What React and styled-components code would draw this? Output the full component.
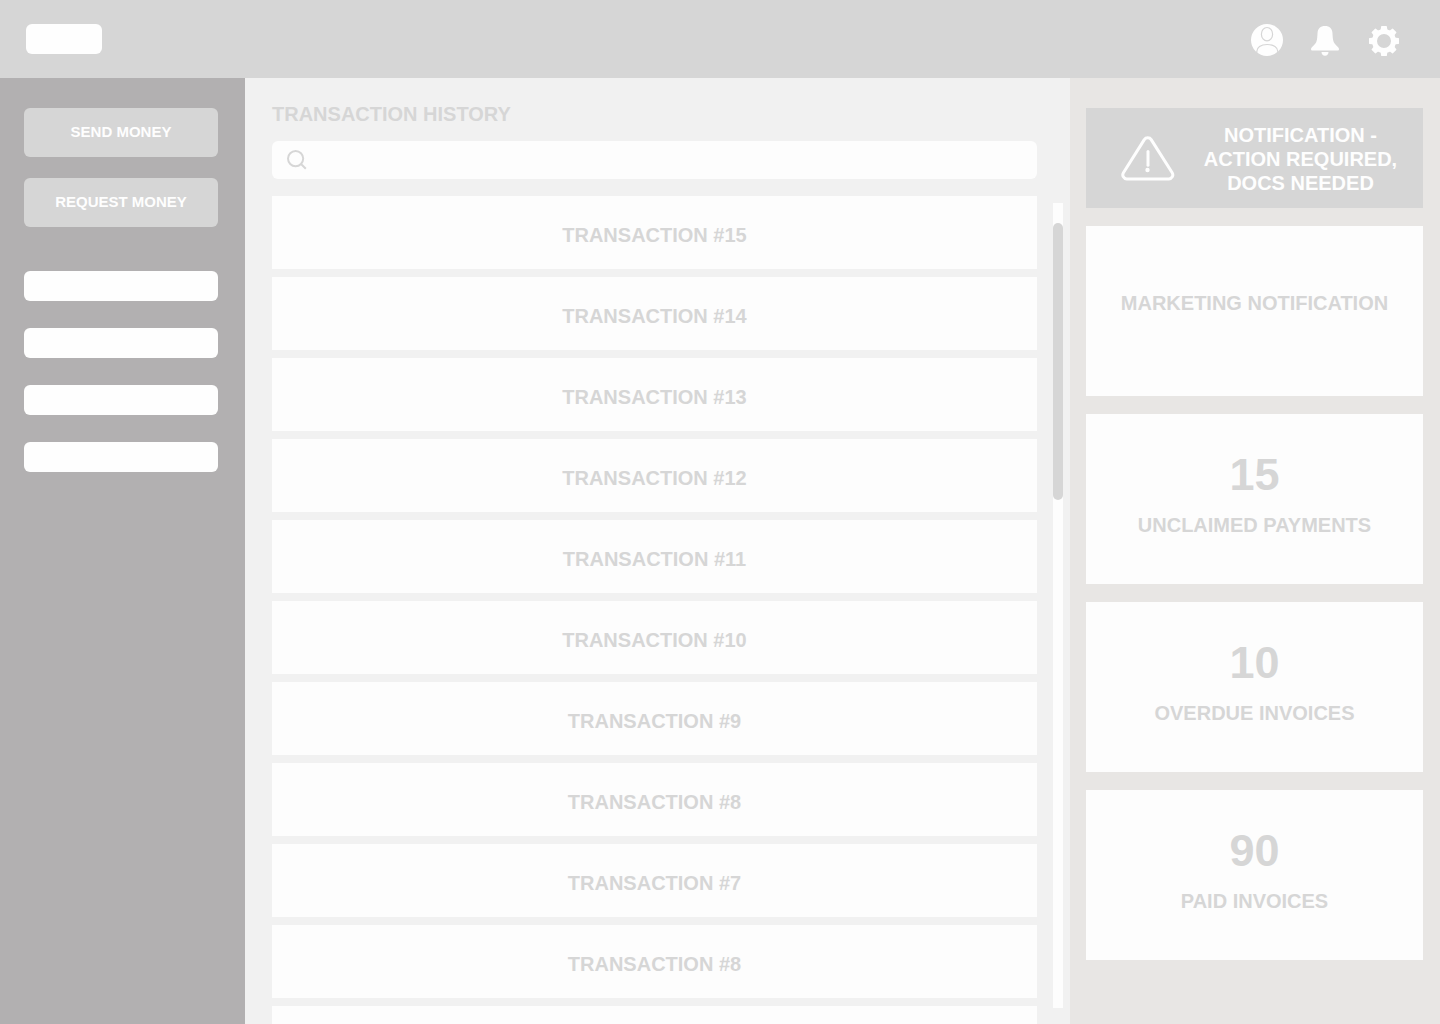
import React from "react";
import styled, { createGlobalStyle } from "styled-components";

const transactions = [15, 14, 13, 12, 11, 10, 9, 8, 7, 8];

const stats = [
  { value: 15, label: "UNCLAIMED PAYMENTS" },
  { value: 10, label: "OVERDUE INVOICES" },
  { value: 90, label: "PAID INVOICES" },
];

const links = ["Overview", "Payments", "Invoices", "Reports"];

const gearTeeth = [0, 45, 90, 135, 180, 225, 270, 315];

const ProfileIcon = () => (
  <svg width="32" height="32" viewBox="0 0 32 32" fill="#fefefe">
    <circle cx="16" cy="16" r="16" />
    <g fill="none" stroke="#d6d6d6" strokeWidth="1.2">
      <ellipse cx="16" cy="10.2" rx="5.6" ry="6.7" />
      <path d="M5.800 29v-1.500c0-4 3.800-7 10.400-7s10.600 3 10.600 7v1.500" />
    </g>
  </svg>
);

const BellIcon = () => (
  <svg width="30" height="32" viewBox="1 0 30 32" fill="#fefefe">
    <path d="M15 2c-4.700 0-7 2.500-7.400 6.500-.4 4-.2 7-1.400 9.700-1.100 2.400-3.400 3.600-4.700 5.500-1 1.500-.4 2.900 1 2.900h25c1.400 0 2-1.400 1-2.900-1.300-1.900-3.600-3.100-4.700-5.500-1.200-2.700-1-5.700-1.400-9.700C22 4.500 19.700 2 15 2z" />
    <path d="M11.500 28h7c0 2.200-1.500 3.800-3.500 3.800s-3.500-1.600-3.500-3.800z" />
  </svg>
);

const GearIcon = () => (
  <svg width="30" height="32" viewBox="0 -2 30 32" fill="#fefefe">
    {gearTeeth.map((angle) => (
      <path
        key={angle}
        d="M10.500 5l1.200-1.500.4-3q.1-.5.600-.5h4.600q.5 0 .600.500l.4 3 1.200 1.500z"
        transform={`rotate(${angle} 15 15)`}
      />
    ))}
    <circle cx="15" cy="15" r="9.500" fill="none" stroke="#fefefe" strokeWidth="5" />
  </svg>
);

const SearchIcon = () => (
  <svg
    width="20"
    height="20"
    viewBox="0 0 20 20"
    fill="none"
    stroke="#d6d6d6"
    strokeWidth="2"
  >
    <circle cx="8.600" cy="8.600" r="7.600" />
    <path d="M14 14l4.800 4.800" />
  </svg>
);

const WarningIcon = () => (
  <svg
    width="54"
    height="46"
    viewBox="0 0 54 46"
    fill="none"
    stroke="#fefefe"
    strokeWidth="3"
    strokeLinecap="round"
    strokeLinejoin="round"
  >
    <path d="M23.300 3.600a4.200 4.200 0 0 1 6.900 0l21 33.200a4 4 0 0 1-3.400 6.100h-42a4 4 0 0 1-3.400-6.100z" />
    <path d="M27 15.500v13.700" />
    <circle cx="26.500" cy="34" r="2.200" fill="#fefefe" stroke="none" />
  </svg>
);

const App = () => {
  return (
    <>
      <GlobalStyle />
      <Page>
        <Header>
          <Logo href="#" aria-label="Home" />
          <HeaderActions>
            <IconButton aria-label="Profile">
              <ProfileIcon />
            </IconButton>
            <IconButton aria-label="Notifications">
              <BellIcon />
            </IconButton>
            <IconButton aria-label="Settings">
              <GearIcon />
            </IconButton>
          </HeaderActions>
        </Header>
        <Body>
          <Sidebar>
            <Actions>
              <ActionButton>SEND MONEY</ActionButton>
              <ActionButton>REQUEST MONEY</ActionButton>
            </Actions>
            <Nav>
              {links.map((link) => (
                <NavLink key={link} href="#" aria-label={link} />
              ))}
            </Nav>
          </Sidebar>
          <History>
            <h1>TRANSACTION HISTORY</h1>
            <Search>
              <SearchIcon />
              <input type="search" aria-label="Search transactions" />
            </Search>
            <ListArea>
              <List>
                {transactions.map((number, i) => (
                  <Transaction key={i}>TRANSACTION #{number}</Transaction>
                ))}
                <Transaction aria-hidden="true" />
              </List>
              <Track>
                <Thumb />
              </Track>
            </ListArea>
          </History>
          <Aside>
            <Alert>
              <WarningIcon />
              <p>NOTIFICATION - ACTION REQUIRED, DOCS NEEDED</p>
            </Alert>
            <Card>
              <p>MARKETING NOTIFICATION</p>
            </Card>
            {stats.map((stat) => (
              <Card key={stat.label}>
                <strong>{stat.value}</strong>
                <p>{stat.label}</p>
              </Card>
            ))}
          </Aside>
        </Body>
      </Page>
    </>
  );
};

const GlobalStyle = createGlobalStyle`
  * {
    margin: 0;
    padding: 0;
    box-sizing: border-box;
  }
  body {
    font-family: "Liberation Sans", Arial, sans-serif;
    font-size: 20px;
    font-weight: bold;
    line-height: 24px;
    color: #d6d6d6;
  }
  button, input {
    font: inherit;
    border: none;
  }
  svg {
    display: block;
    flex-shrink: 0;
  }
`;

const Page = styled.div`
  height: 100vh;
  display: flex;
  flex-direction: column;
  overflow: hidden;
`;

const Header = styled.header`
  display: flex;
  align-items: flex-start;
  justify-content: space-between;
  padding: 24px 41px 22px 26px;
  background: #d6d6d6;
`;

const Logo = styled.a`
  width: 76px;
  height: 30px;
  border-radius: 6px;
  background: #fefefe;
`;

const HeaderActions = styled.div`
  display: flex;
  gap: 28px;
`;

const IconButton = styled.button`
  background: none;
  cursor: pointer;
`;

const Body = styled.div`
  flex: 1;
  min-height: 0;
  display: grid;
  grid-template-columns: 245px 1fr 370px;
  grid-template-rows: minmax(0, 1fr);
`;

const Sidebar = styled.aside`
  display: flex;
  flex-direction: column;
  gap: 44px;
  padding: 30px 27px 30px 24px;
  background: #b2b0b1;
`;

const Actions = styled.div`
  display: flex;
  flex-direction: column;
  gap: 21px;
`;

const ActionButton = styled.button`
  height: 49px;
  padding-bottom: 2px;
  border-radius: 6px;
  background: #d6d6d6;
  color: #fefefe;
  font-size: 15px;
  cursor: pointer;
`;

const Nav = styled.nav`
  display: flex;
  flex-direction: column;
  gap: 27px;
`;

const NavLink = styled.a`
  height: 30px;
  border-radius: 6px;
  background: #fefefe;
`;

const History = styled.main`
  display: flex;
  flex-direction: column;
  padding: 24px 7px 0 27px;
  background: #f1f1f1;
  h1 {
    font-size: 20px;
  }
`;

const Search = styled.label`
  display: flex;
  align-items: center;
  gap: 12px;
  height: 38px;
  margin: 15px 26px 17px 0;
  padding: 0 15px;
  border-radius: 6px;
  background: #fdfdfd;
  input {
    flex: 1;
    background: none;
    outline: none;
    color: #b2b0b1;
  }
`;

const ListArea = styled.div`
  flex: 1;
  min-height: 0;
  display: flex;
  gap: 16px;
`;

const List = styled.ul`
  flex: 1;
  display: flex;
  flex-direction: column;
  gap: 8px;
  list-style: none;
  overflow-y: auto;
  scrollbar-width: none;
`;

const Transaction = styled.li`
  flex-shrink: 0;
  height: 73px;
  padding-top: 27px;
  text-align: center;
  background: #fdfdfd;
`;

const Track = styled.div`
  width: 10px;
  margin: 7px 0 16px;
  padding-top: 20px;
  background: #fdfdfd;
`;

const Thumb = styled.div`
  height: 277px;
  border-radius: 5px;
  background: #d6d6d6;
`;

const Aside = styled.aside`
  display: flex;
  flex-direction: column;
  gap: 18px;
  padding: 30px 17px 30px 16px;
  background: #e8e6e4;
`;

const Alert = styled.section`
  display: flex;
  align-items: center;
  gap: 24px;
  height: 100px;
  padding: 2px 21px 0 35px;
  background: #d6d6d6;
  color: #fefefe;
  p {
    flex: 1;
    text-align: center;
  }
`;

const Card = styled.section`
  display: flex;
  flex-direction: column;
  align-items: center;
  justify-content: center;
  gap: 8px;
  height: 170px;
  padding-bottom: 16px;
  background: #fdfdfd;
  strong {
    font-size: 45px;
    line-height: 60px;
  }
`;

export default App;
